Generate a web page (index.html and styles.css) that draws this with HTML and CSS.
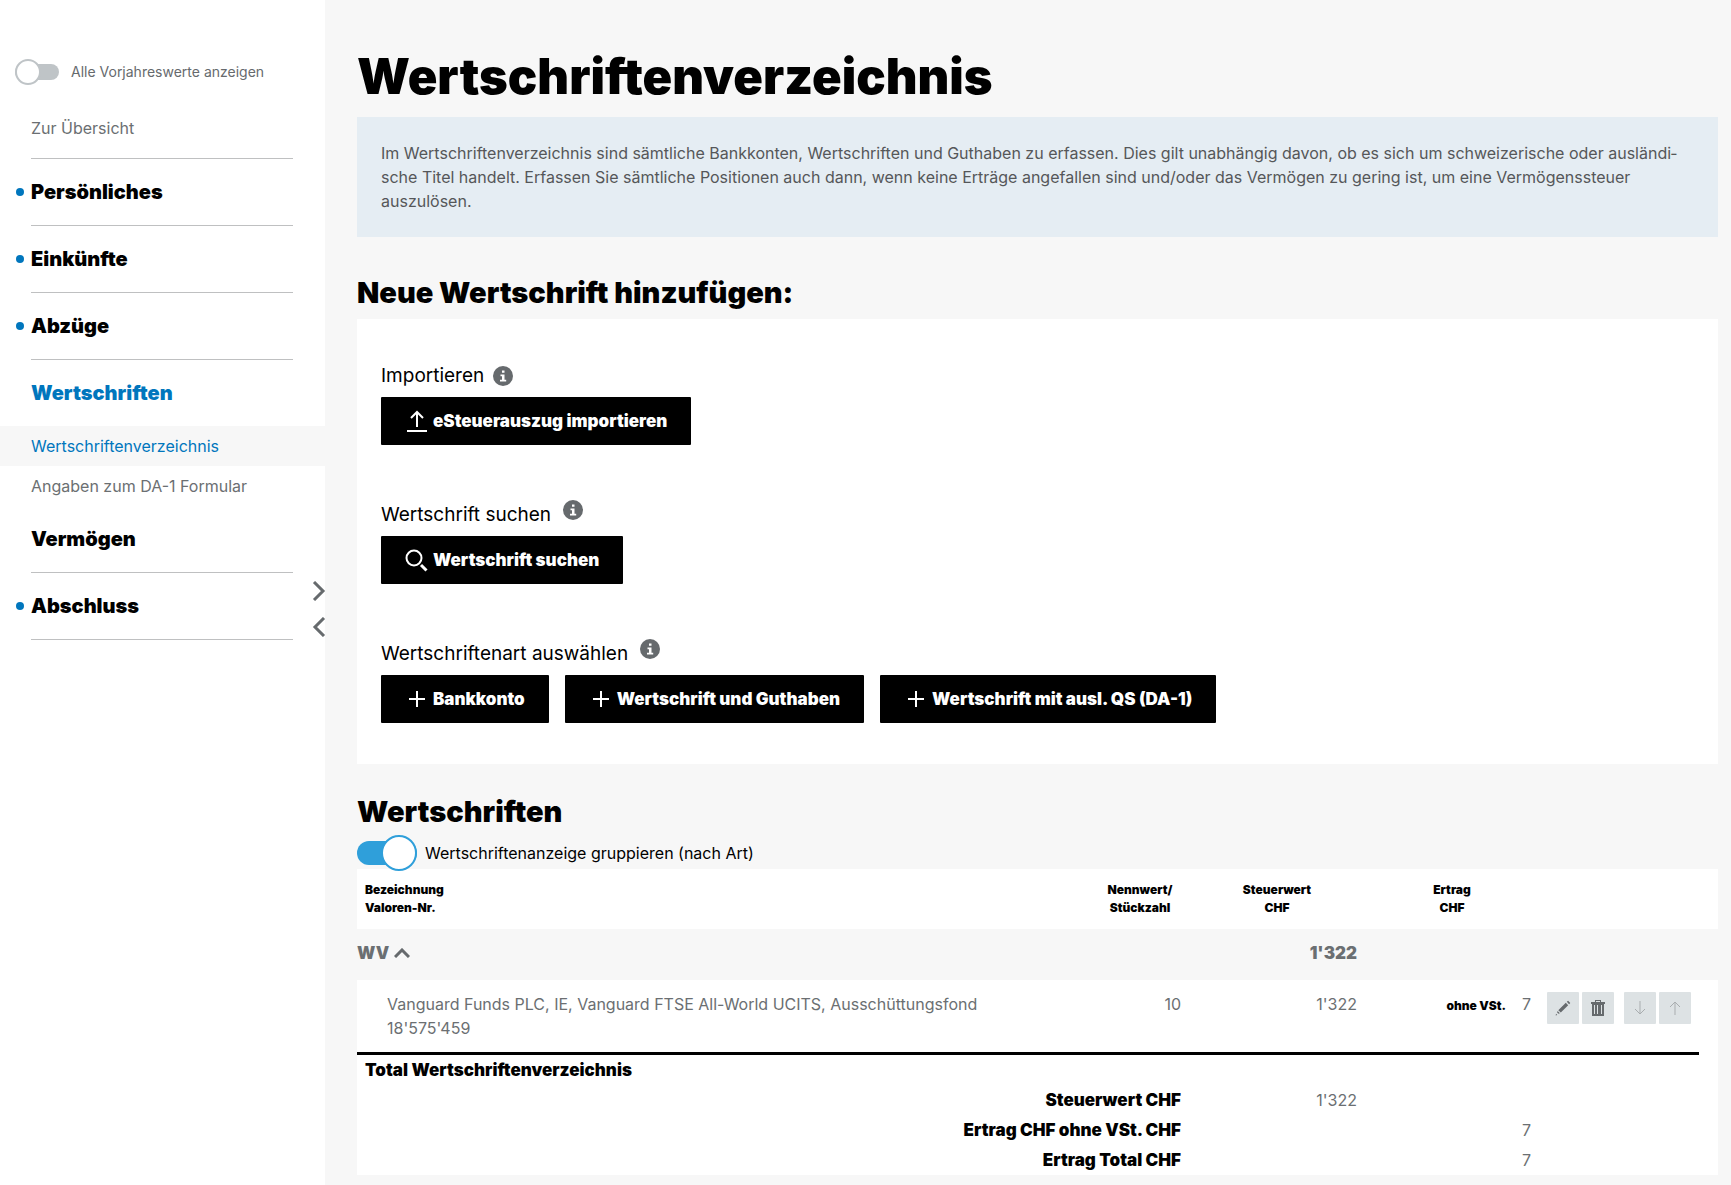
FILE: index.html
```html
<!DOCTYPE html>
<html lang="de">
  <head>
    <meta charset="utf-8" />
    <meta name="viewport" content="width=device-width, initial-scale=1" />
    <title>Wertschriftenverzeichnis</title>
    <link rel="stylesheet" href="styles.css">
  </head>

  <body>
    <div class="page">
      <!-- Navigation -->
      <aside class="sidebar">
        <div class="prev-year">
          <input type="checkbox" class="switch switch-small" id="prevYear" />
          <label for="prevYear">Alle Vorjahreswerte anzeigen</label>
        </div>

        <nav>
          <ul class="menu">
            <li class="overview"><a href="#">Zur Übersicht</a></li>
            <li class="item dot"><a href="#">Persönliches</a></li>
            <li class="item dot"><a href="#">Einkünfte</a></li>
            <li class="item dot"><a href="#">Abzüge</a></li>
            <li class="item open"><a href="#">Wertschriften</a></li>
            <li class="sub active"><a href="#">Wertschriftenverzeichnis</a></li>
            <li class="sub"><a href="#">Angaben zum DA-1 Formular</a></li>
            <li class="item"><a href="#">Vermögen</a></li>
            <li class="item dot"><a href="#">Abschluss</a></li>
          </ul>
        </nav>

        <!-- Breite der Navigation -->
        <div class="resize">
          <button type="button" aria-label="Navigation verbreitern">
            <svg width="14" height="20" viewBox="0 0 14 20"><path d="M2 1l9 9-9 9" /></svg>
          </button>
          <button type="button" aria-label="Navigation verkleinern">
            <svg width="14" height="20" viewBox="0 0 14 20"><path d="M12 1l-9 9 9 9" /></svg>
          </button>
        </div>
      </aside>

      <main class="content">
        <h1>Wertschriftenverzeichnis</h1>
        <p class="intro">
          Im Wertschriftenverzeichnis sind sämtliche Bankkonten, Wertschriften und Guthaben zu erfassen. Dies gilt unabhängig davon, ob es sich um schweizerische oder ausländi&shy;sche Titel handelt. Erfassen Sie sämtliche Positionen auch dann, wenn keine Erträge angefallen sind und/oder das Vermögen zu gering ist, um eine Vermögenssteuer auszulösen.
        </p>

        <h2>Neue Wertschrift hinzufügen:</h2>
        <section class="panel">
          <div class="group">
            <div class="group-title">
              <span>Importieren</span>
              <button type="button" class="info" aria-label="Info Importieren">
                <svg width="20" height="20" viewBox="0 0 20 20"><circle cx="10" cy="10" r="10" /><path d="M9 4.500h2.500v2.200H9zM7.500 8.500h4v5.300h1.700v1.700H7v-1.700h2v-3.600H7.500z" /></svg>
              </button>
            </div>
            <div class="buttons">
              <button type="button" class="btn">
                <svg width="24" height="24" viewBox="0 0 24 24"><path d="M12 18V3M6 9l6-6 6 6M2 22h20" /></svg>
                eSteuerauszug importieren
              </button>
            </div>
          </div>

          <div class="group">
            <div class="group-title raised">
              <span>Wertschrift suchen</span>
              <button type="button" class="info" aria-label="Info Wertschrift suchen">
                <svg width="20" height="20" viewBox="0 0 20 20"><circle cx="10" cy="10" r="10" /><path d="M9 4.500h2.500v2.200H9zM7.500 8.500h4v5.300h1.700v1.700H7v-1.700h2v-3.600H7.500z" /></svg>
              </button>
            </div>
            <div class="buttons">
              <button type="button" class="btn">
                <svg width="24" height="24" viewBox="0 0 24 24"><circle cx="9" cy="10" r="7.500" /><path d="M16 17l5.500 5.500" stroke-width="3" /></svg>
                Wertschrift suchen
              </button>
            </div>
          </div>

          <div class="group">
            <div class="group-title raised">
              <span>Wertschriftenart auswählen</span>
              <button type="button" class="info" aria-label="Info Wertschriftenart">
                <svg width="20" height="20" viewBox="0 0 20 20"><circle cx="10" cy="10" r="10" /><path d="M9 4.500h2.500v2.200H9zM7.500 8.500h4v5.300h1.700v1.700H7v-1.700h2v-3.600H7.500z" /></svg>
              </button>
            </div>
            <div class="buttons">
              <button type="button" class="btn">
                <svg width="24" height="24" viewBox="0 0 24 24"><path d="M12 4v16M4 12h16" /></svg>
                Bankkonto
              </button>
              <button type="button" class="btn">
                <svg width="24" height="24" viewBox="0 0 24 24"><path d="M12 4v16M4 12h16" /></svg>
                Wertschrift und Guthaben
              </button>
              <button type="button" class="btn">
                <svg width="24" height="24" viewBox="0 0 24 24"><path d="M12 4v16M4 12h16" /></svg>
                Wertschrift mit ausl. QS (DA-1)
              </button>
            </div>
          </div>
        </section>

        <h2 class="list-title">Wertschriften</h2>
        <div class="grouping">
          <input type="checkbox" class="switch" id="grouping" checked />
          <label for="grouping">Wertschriftenanzeige gruppieren (nach Art)</label>
        </div>

        <table class="list">
          <colgroup>
            <col />
            <col class="col-count" />
            <col class="col-value" />
            <col class="col-income" />
            <col class="col-actions" />
            <col class="col-end" />
          </colgroup>
          <thead>
            <tr>
              <th class="left">Bezeichnung<br />Valoren-Nr.</th>
              <th>Nennwert/<br />Stückzahl</th>
              <th>Steuerwert<br />CHF</th>
              <th>Ertrag<br />CHF</th>
              <td></td>
              <td></td>
            </tr>
          </thead>
          <tbody>
            <tr class="category">
              <td colspan="2">
                <button type="button" class="fold">
                  WV
                  <svg width="16" height="10" viewBox="0 0 16 10"><path d="M1 9l7-7 7 7" /></svg>
                </button>
              </td>
              <td>1'322</td>
              <td colspan="3"></td>
            </tr>
            <tr class="entry">
              <td class="name">Vanguard Funds PLC, IE, Vanguard FTSE All-World UCITS, Ausschüttungsfond<br />18'575'459</td>
              <td>10</td>
              <td>1'322</td>
              <td><b class="note">ohne VSt.</b>7</td>
              <td>
                <div class="actions">
                  <button type="button" aria-label="Bearbeiten">
                    <svg width="16" height="16" viewBox="0 0 16 16"><path d="M11.800 1.800l1.300-1.100 2.200 2.200-1.200 1.300zM10.800 2.800l2.400 2.400-7.400 7.400-2.500-2.400zM2.600 11l2.300 2.300-1.400.5-1.400-1.400zM1 13.700l1.300 1.200-1.600.5z" /></svg>
                  </button>
                  <button type="button" aria-label="Löschen">
                    <svg width="16" height="16" viewBox="0 0 16 16"><path fill-rule="evenodd" d="M5 0h6v2h4v2h-1v12H2V4H1V2h4zM6 1v1h4V1zM4 5v9h1V5zM7 5v9h1V5zM11 5v9h1V5z" /></svg>
                  </button>
                  <button type="button" class="move" aria-label="Nach unten" disabled>
                    <svg width="16" height="16" viewBox="0 0 16 16"><path d="M8 1v13M3 9l5 5 5-5" /></svg>
                  </button>
                  <button type="button" class="move" aria-label="Nach oben" disabled>
                    <svg width="16" height="16" viewBox="0 0 16 16"><path d="M8 15V2M3 7l5-5 5 5" /></svg>
                  </button>
                </div>
              </td>
              <td></td>
            </tr>
          </tbody>
          <tfoot>
            <tr class="total">
              <th class="left" colspan="5">Total Wertschriftenverzeichnis</th>
              <td></td>
            </tr>
            <tr>
              <th colspan="2">Steuerwert CHF</th>
              <td>1'322</td>
              <td></td>
              <td></td>
              <td></td>
            </tr>
            <tr>
              <th colspan="2">Ertrag CHF ohne VSt. CHF</th>
              <td></td>
              <td>7</td>
              <td></td>
              <td></td>
            </tr>
            <tr>
              <th colspan="2">Ertrag Total CHF</th>
              <td></td>
              <td>7</td>
              <td></td>
              <td></td>
            </tr>
          </tfoot>
        </table>
      </main>
    </div>
  </body>
</html>
```
FILE: styles.css
```css
*,
*::before {
  box-sizing: border-box;
}
body {
  margin: 0;
  background: #f7f7f7;
  color: #000;
  font: 16px/24px Inter, "Liberation Sans", sans-serif;
}
a {
  color: inherit;
  text-decoration: none;
}
button {
  padding: 0;
  border: 0;
  background: none;
  color: inherit;
  font: inherit;
  cursor: pointer;
}
svg {
  display: block;
  flex: none;
}

.page {
  display: flex;
  min-height: 100vh;
}

/* Navigation */
.sidebar {
  position: relative;
  flex: none;
  width: 325px;
  padding-top: 59px;
  background: #fff;
}
.prev-year {
  display: flex;
  align-items: center;
  gap: 12px;
  height: 26px;
  padding-left: 15px;
  color: #666a6d;
  font-size: 14px;
}
.menu {
  margin: 0;
  padding: 0;
  list-style: none;
}
.overview,
.item {
  position: relative;
  margin: 0 32px 0 31px;
  border-bottom: 1px solid #bfc0c1;
}
.overview {
  padding: 31px 0 18px;
  color: #6b6f72;
}
.item a {
  display: block;
  padding: 21px 0;
  font-size: 20px;
  font-weight: 900;
}
.item.open {
  border-bottom: 0;
  color: #0076bd;
}
/* blauer Punkt = bereits ausgefüllt */
.dot::before {
  content: "";
  position: absolute;
  top: 29px;
  left: -15px;
  width: 8px;
  height: 8px;
  border-radius: 50%;
  background: #0076bd;
}
.sub a {
  display: block;
  padding: 8px 31px;
  color: #6b6f72;
}
.sub.active a {
  background: #f7f7f7;
  color: #0076bd;
}
.resize {
  position: absolute;
  top: 581px;
  right: -1px;
  display: grid;
  gap: 16px;
}
.resize svg {
  fill: none;
  stroke: #666a6d;
  stroke-width: 3;
}

/* Schalter */
.switch {
  appearance: none;
  display: flex;
  align-items: center;
  flex: none;
  width: 60px;
  height: 24px;
  margin: 0;
  border-radius: 12px;
  background: #bfc4c7;
  cursor: pointer;
}
.switch::before {
  content: "";
  flex: none;
  width: 36px;
  height: 36px;
  border: 2px solid #bfc4c7;
  border-radius: 50%;
  background: #fff;
}
.switch:checked {
  justify-content: flex-end;
  background: #2f9fda;
}
.switch:checked::before {
  border-color: #2f9fda;
}
.switch-small {
  width: 44px;
  height: 16px;
}
.switch-small::before {
  width: 26px;
  height: 26px;
}

/* Inhalt */
.content {
  flex: 1;
  min-width: 0;
  padding: 48px 13px 10px 32px;
}
h1 {
  margin: 0 0 11px;
  font-size: 49px;
  font-weight: 900;
  line-height: 58px;
}
h2 {
  margin: 38px 0 8px;
  font-size: 29px;
  font-weight: 900;
  line-height: 36px;
}
.intro {
  margin: 0;
  padding: 24px;
  background: #e5edf3;
  color: #555759;
}
.panel {
  display: grid;
  gap: 57px;
  padding: 44px 24px 41px;
  background: #fff;
}
.group-title {
  display: flex;
  align-items: center;
  gap: 9px;
  margin-bottom: 8px;
  font-size: 19px;
  line-height: 26px;
}
.group-title.raised {
  align-items: flex-start;
  gap: 12px;
}
.group-title.raised .info {
  margin-top: -2px;
}
.info circle {
  fill: #666a6d;
}
.info path {
  fill: #fff;
}
.buttons {
  display: flex;
  flex-wrap: wrap;
  gap: 16px;
}
.btn {
  display: flex;
  align-items: center;
  gap: 4px;
  min-height: 48px;
  padding: 0 24px;
  border-radius: 1px;
  background: #000;
  color: #fff;
  font-size: 17px;
  font-weight: 900;
}
.btn svg {
  fill: none;
  stroke: #fff;
  stroke-width: 2;
}

/* Liste */
.list-title {
  margin: 30px 0 0;
}
.grouping {
  display: flex;
  align-items: center;
  gap: 8px;
  height: 39px;
  padding-top: 6px;
}
.grouping .switch {
  position: relative;
  z-index: 1;
}
.list {
  width: 100%;
  border-collapse: separate;
  border-spacing: 0;
  table-layout: fixed;
}
.col-count {
  width: 98px;
}
.col-value {
  width: 176px;
}
.col-income {
  width: 174px;
}
.col-actions {
  width: 160px;
}
.col-end {
  width: 19px;
}
.list th,
.list td {
  padding: 0 8px;
  text-align: right;
  vertical-align: top;
}
.list th {
  font-size: 17px;
  font-weight: 900;
}
.list td {
  color: #6b6f72;
}
.list thead th {
  padding: 12px 0;
  font-size: 12px;
  line-height: 18px;
  text-align: center;
}
.list th.left {
  padding-left: 8px;
  text-align: left;
}
.list thead,
.list tfoot,
.entry {
  background: #fff;
}
.list .category td {
  height: 51px;
  padding-top: 12px;
  font-size: 17px;
  font-weight: 900;
}
.list .category td:first-child {
  padding-left: 0;
  text-align: left;
}
.fold {
  display: flex;
  align-items: center;
  gap: 5px;
}
.fold svg {
  fill: none;
  stroke: #666a6d;
  stroke-width: 3;
}
.list .entry td {
  padding-top: 12px;
  padding-bottom: 12px;
}
.list .entry .name {
  padding-left: 30px;
  text-align: left;
}
.note {
  margin-right: 16px;
  color: #000;
  font-size: 12px;
  font-weight: 900;
}
.actions {
  display: flex;
  gap: 3px;
}
.actions button {
  display: grid;
  place-items: center;
  width: 32px;
  height: 32px;
  border-radius: 1px;
  background: #dde2e4;
}
.actions button:nth-child(3) {
  margin-left: 7px;
}
.actions svg {
  fill: #666a6d;
}
.actions .move svg {
  fill: none;
  stroke: #a9adaf;
}
.list .total th {
  border-top: 3px solid #000;
}
.list tfoot th,
.list tfoot td {
  padding-top: 3px;
  padding-bottom: 3px;
}
```
